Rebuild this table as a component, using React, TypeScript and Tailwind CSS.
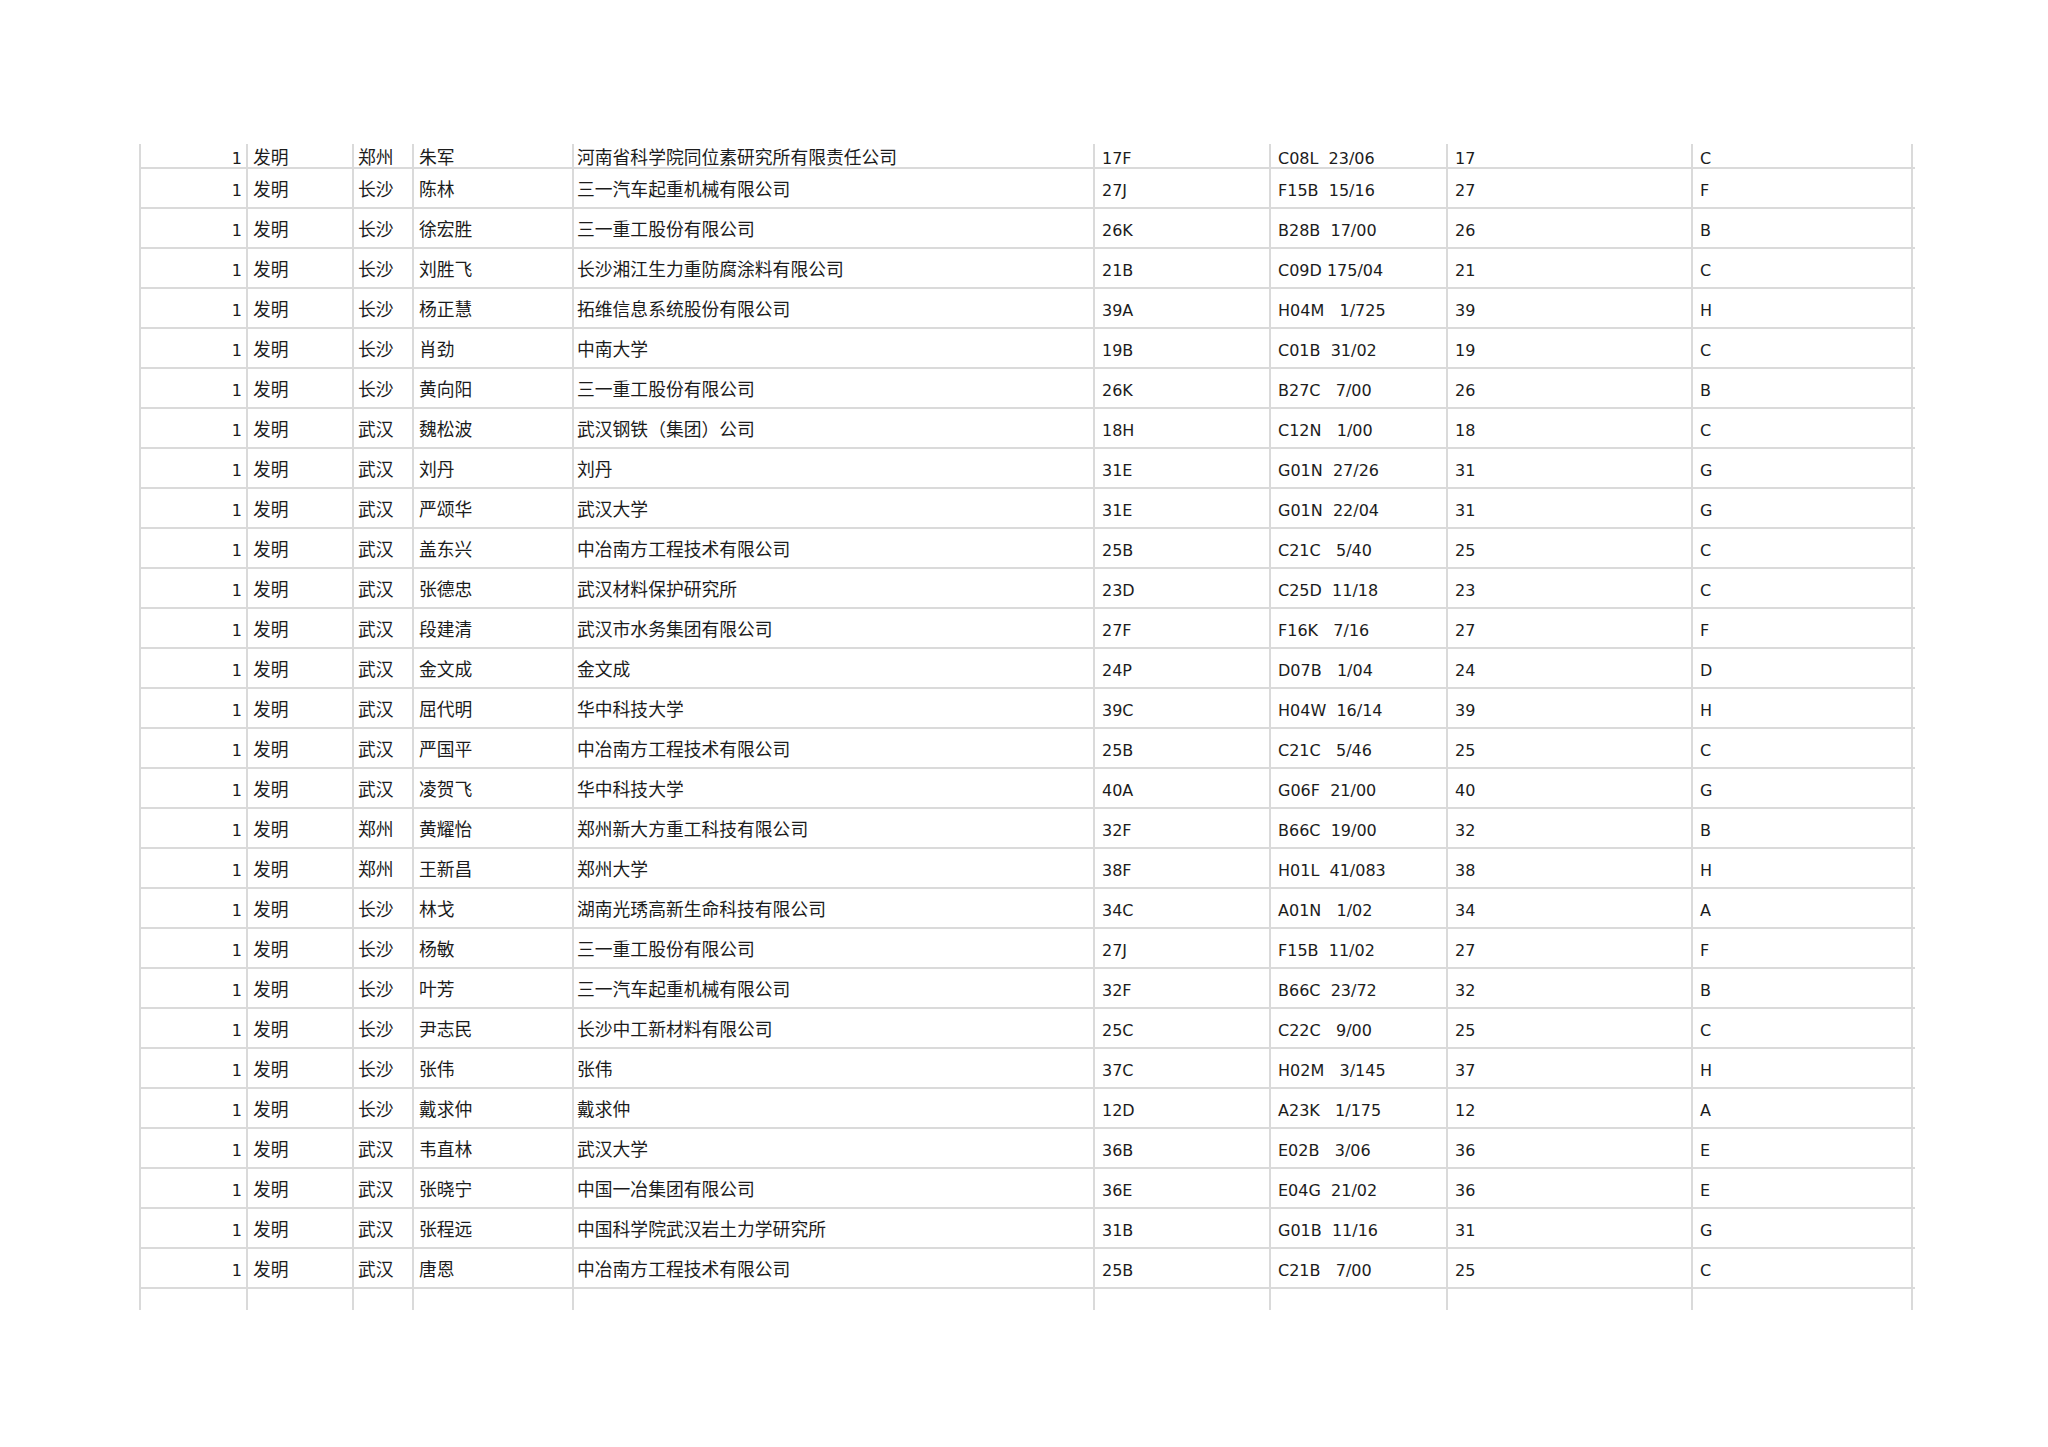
import { clsx as cn } from 'clsx'

type Row = [string, string, string, string, string, string, string]

// city, inventor, applicant, class, IPC, section no., section
const rows: Row[] = [
  ['郑州', '朱军', '河南省科学院同位素研究所有限责任公司', '17F', 'C08L  23/06', '17', 'C'],
  ['长沙', '陈林', '三一汽车起重机械有限公司', '27J', 'F15B  15/16', '27', 'F'],
  ['长沙', '徐宏胜', '三一重工股份有限公司', '26K', 'B28B  17/00', '26', 'B'],
  ['长沙', '刘胜飞', '长沙湘江生力重防腐涂料有限公司', '21B', 'C09D 175/04', '21', 'C'],
  ['长沙', '杨正慧', '拓维信息系统股份有限公司', '39A', 'H04M   1/725', '39', 'H'],
  ['长沙', '肖劲', '中南大学', '19B', 'C01B  31/02', '19', 'C'],
  ['长沙', '黄向阳', '三一重工股份有限公司', '26K', 'B27C   7/00', '26', 'B'],
  ['武汉', '魏松波', '武汉钢铁（集团）公司', '18H', 'C12N   1/00', '18', 'C'],
  ['武汉', '刘丹', '刘丹', '31E', 'G01N  27/26', '31', 'G'],
  ['武汉', '严颂华', '武汉大学', '31E', 'G01N  22/04', '31', 'G'],
  ['武汉', '盖东兴', '中冶南方工程技术有限公司', '25B', 'C21C   5/40', '25', 'C'],
  ['武汉', '张德忠', '武汉材料保护研究所', '23D', 'C25D  11/18', '23', 'C'],
  ['武汉', '段建清', '武汉市水务集团有限公司', '27F', 'F16K   7/16', '27', 'F'],
  ['武汉', '金文成', '金文成', '24P', 'D07B   1/04', '24', 'D'],
  ['武汉', '屈代明', '华中科技大学', '39C', 'H04W  16/14', '39', 'H'],
  ['武汉', '严国平', '中冶南方工程技术有限公司', '25B', 'C21C   5/46', '25', 'C'],
  ['武汉', '凌贺飞', '华中科技大学', '40A', 'G06F  21/00', '40', 'G'],
  ['郑州', '黄耀怡', '郑州新大方重工科技有限公司', '32F', 'B66C  19/00', '32', 'B'],
  ['郑州', '王新昌', '郑州大学', '38F', 'H01L  41/083', '38', 'H'],
  ['长沙', '林戈', '湖南光琇高新生命科技有限公司', '34C', 'A01N   1/02', '34', 'A'],
  ['长沙', '杨敏', '三一重工股份有限公司', '27J', 'F15B  11/02', '27', 'F'],
  ['长沙', '叶芳', '三一汽车起重机械有限公司', '32F', 'B66C  23/72', '32', 'B'],
  ['长沙', '尹志民', '长沙中工新材料有限公司', '25C', 'C22C   9/00', '25', 'C'],
  ['长沙', '张伟', '张伟', '37C', 'H02M   3/145', '37', 'H'],
  ['长沙', '戴求仲', '戴求仲', '12D', 'A23K   1/175', '12', 'A'],
  ['武汉', '韦直林', '武汉大学', '36B', 'E02B   3/06', '36', 'E'],
  ['武汉', '张晓宁', '中国一冶集团有限公司', '36E', 'E04G  21/02', '36', 'E'],
  ['武汉', '张程远', '中国科学院武汉岩土力学研究所', '31B', 'G01B  11/16', '31', 'G'],
  ['武汉', '唐恩', '中冶南方工程技术有限公司', '25B', 'C21B   7/00', '25', 'C'],
]

const grid = 'grid grid-cols-[107px_106px_60px_160px_521px_176px_177px_245px_222px]'
const cell = 'flex items-center whitespace-pre border-l-2 border-[#dadada]'
const cjk = "font-['Noto_Sans_CJK_SC',sans-serif] text-[17.8px] pl-[5px] pt-[2px]"
const latin = "font-['DejaVu_Sans','Noto_Sans_CJK_SC',sans-serif] text-[16px] pl-[7px] pt-[6px]"

function DataRow({ row, first }: { row: Row; first?: boolean }) {
  const [city, name, org, cls, ipc, sec, letter] = row
  return (
    <div className={cn(grid, 'border-b-2 border-[#dadada]', first ? 'h-[25px]' : 'h-[40px]')}>
      <div className={cn(cell, latin, 'justify-end !pl-0 pr-[4px]')}>1</div>
      <div className={cn(cell, cjk)}>发明</div>
      <div className={cn(cell, cjk, '!pl-[4px]')}>{city}</div>
      <div className={cn(cell, cjk)}>{name}</div>
      <div className={cn(cell, cjk, '!pl-[3px]')}>{org}</div>
      <div className={cn(cell, latin)}>{cls}</div>
      <div className={cn(cell, latin)}>{ipc}</div>
      <div className={cn(cell, latin)}>{sec}</div>
      <div className={cn(cell, latin, 'border-r-2')}>{letter}</div>
    </div>
  )
}

export default function App() {
  return (
    <div className="min-h-[1447px] w-[2048px] bg-white pl-[139px] pt-[144px] text-[#1c1c1c]">
      <div className="w-[1776px] leading-none">
        {rows.map((row, i) => (
          <DataRow key={i} row={row} first={i === 0} />
        ))}
        <div className={cn(grid, 'h-[21px]')}>
          {Array.from({ length: 9 }).map((_, i) => (
            <div key={i} className={cn(cell, i === 8 && 'border-r-2')} />
          ))}
        </div>
      </div>
    </div>
  )
}
